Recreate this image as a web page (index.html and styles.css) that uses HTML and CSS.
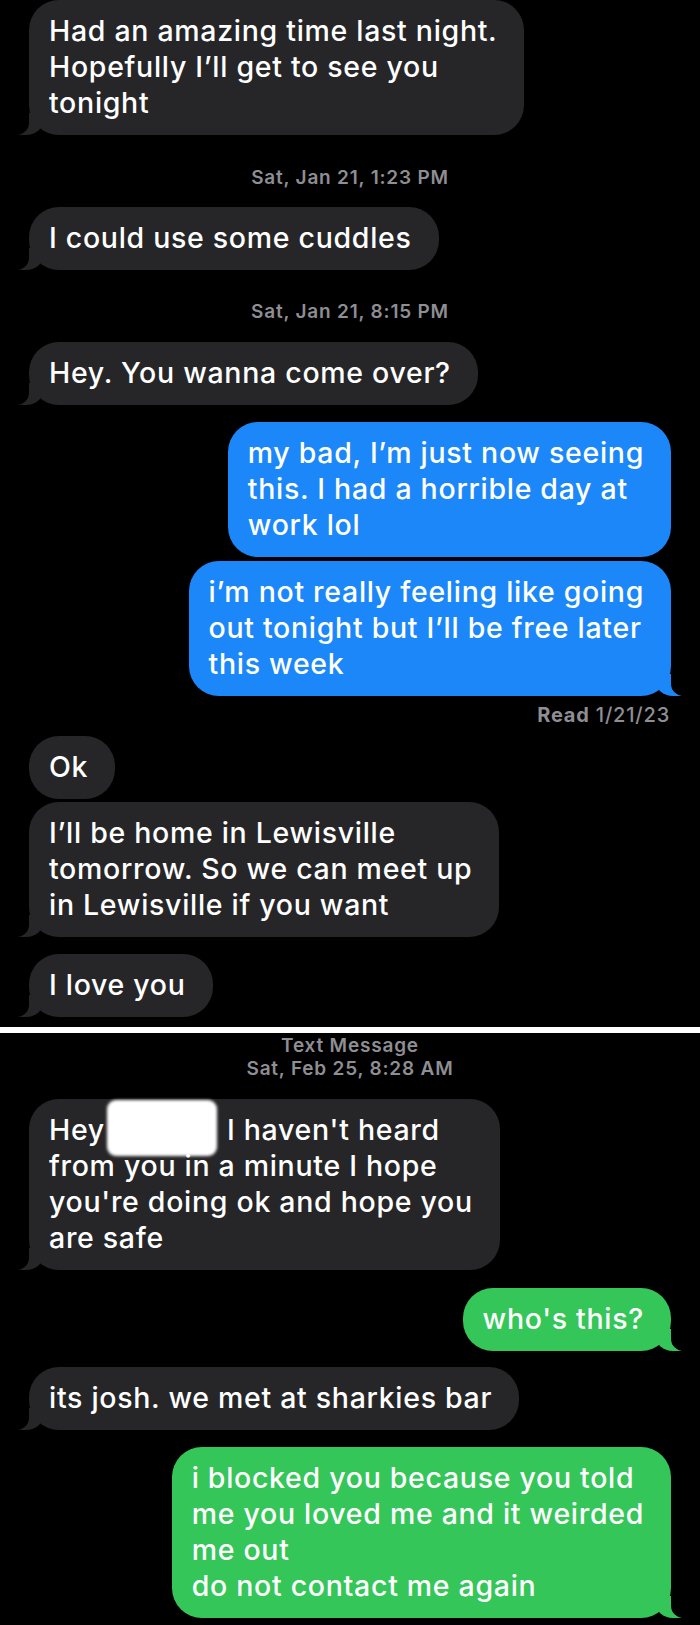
FILE: index.html
```html
<!DOCTYPE html>
<html lang="en">
<head>
<meta charset="utf-8">
<title>Messages</title>
<link rel="stylesheet" href="styles.css">
</head>
<body>
<main class="thread">
  <section class="part part-first">
    <div class="bubble recv tail first">Had an amazing time last night.<br>Hopefully I’ll get to see you<br>tonight</div>
    <div class="stamp stamp-a">Sat, Jan 21, 1:23 PM</div>
    <div class="bubble recv tail after-stamp">I could use some cuddles</div>
    <div class="stamp stamp-b">Sat, Jan 21, 8:15 PM</div>
    <div class="bubble recv tail after-stamp2">Hey. You wanna come over?</div>
    <div class="bubble sent blue new-group">my bad, I’m just now seeing<br>this. I had a horrible day at<br>work lol</div>
    <div class="bubble sent blue tail same-group">i’m not really feeling like going<br>out tonight but I’ll be free later<br>this week</div>
    <div class="receipt"><b>Read</b> 1/21/23</div>
    <div class="bubble recv after-receipt">Ok</div>
    <div class="bubble recv tail same-group-tight">I’ll be home in Lewisville<br>tomorrow. So we can meet up<br>in Lewisville if you want</div>
    <div class="bubble recv tail new-group">I love you</div>
  </section>
  <hr class="divider">
  <section class="part part-second">
    <div class="stamp stamp-head">Text Message<br>Sat, Feb 25, 8:28 AM</div>
    <div class="bubble recv tail after-head">Hey<span class="redact"></span>I haven't heard<br>from you in a minute I hope<br>you're doing ok and hope you<br>are safe</div>
    <div class="bubble sent green tail new-group-b">who's this?</div>
    <div class="bubble recv tail new-group-c">its josh. we met at sharkies bar</div>
    <div class="bubble sent green tail new-group">i blocked you because you told<br>me you loved me and it weirded<br>me out<br>do not contact me again</div>
  </section>
</main>
</body>
</html>
```
FILE: styles.css
```css
html, body {
  margin: 0;
  padding: 0;
  background: #000;
}

body {
  width: 700px;
  height: 1625px;
  overflow: hidden;
  font-family: "Inter", "Roboto", "Liberation Sans", sans-serif;
  color: #fff;
}

.thread {
  display: flex;
  flex-direction: column;
}

.part {
  display: flex;
  flex-direction: column;
  padding: 0 29px;
}

.bubble {
  position: relative;
  white-space: nowrap;
  font-size: 28.5px;
  line-height: 36px;
  letter-spacing: 0.7px;
  font-weight: 500;
  padding: 13px 27px 14px 20px;
  border-radius: 30px;
}

.recv {
  align-self: flex-start;
  background: #262628;
}

.sent {
  align-self: flex-end;
}

.blue {
  background: #1c87f8;
}

.green {
  background: #35c659;
}

/* iMessage tails */
.recv.tail::before,
.recv.tail::after,
.sent.tail::before,
.sent.tail::after {
  content: "";
  position: absolute;
  bottom: 0;
  height: 22px;
}

.recv.tail::before {
  left: -11px;
  width: 26px;
  background: #262628;
  border-bottom-right-radius: 18px 16px;
}

.recv.tail::after {
  left: -26px;
  width: 26px;
  background: #000;
  border-bottom-right-radius: 13px 12px;
}

.sent.tail::before {
  right: -10px;
  width: 26px;
  border-bottom-left-radius: 18px 16px;
}

.blue.tail::before {
  background: #1c87f8;
}

.green.tail::before {
  background: #35c659;
}

.sent.tail::after {
  right: -26px;
  width: 26px;
  background: #000;
  border-bottom-left-radius: 13px 12px;
}

/* vertical rhythm */
.first { margin-top: 0; }
.after-stamp { margin-top: 18px; }
.after-stamp2 { margin-top: 19px; }
.new-group { margin-top: 17px; }
.new-group-b { margin-top: 18px; }
.new-group-c { margin-top: 16px; }
.same-group { margin-top: 4px; }
.same-group-tight { margin-top: 3px; }
.after-receipt { margin-top: 9px; }
.after-head { margin-top: 19px; }

.stamp {
  align-self: center;
  text-align: center;
  color: #8e8e93;
  font-size: 19px;
  line-height: 23px;
  font-weight: 600;
  letter-spacing: 0.8px;
}

.stamp-a { margin-top: 31px; }
.stamp-b { margin-top: 30px; }
.stamp-head { margin-top: 1px; }

.receipt {
  align-self: flex-end;
  margin-top: 8px;
  margin-right: 1px;
  color: #8e8e93;
  font-size: 20px;
  line-height: 23px;
  font-weight: 500;
  letter-spacing: 0.8px;
}

.receipt b {
  font-weight: 700;
}

.divider {
  margin: 10px 0 0;
  border: 0;
  height: 6px;
  background: #fff;
}

.redact {
  position: relative;
  z-index: 1;
  display: inline-block;
  width: 110px;
  height: 56px;
  margin: -12px 10px -8px 2px;
  vertical-align: top;
  background: #fff;
  border-radius: 9px;
  filter: blur(1.6px);
}
```
